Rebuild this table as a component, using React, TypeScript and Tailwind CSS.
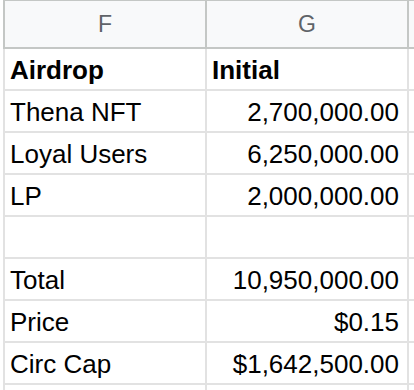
const rows: [string, string, boolean?][] = [
  ["Airdrop", "Initial", true],
  ["Thena NFT", "2,700,000.00"],
  ["Loyal Users", "6,250,000.00"],
  ["LP", "2,000,000.00"],
  ["", ""],
  ["Total", "10,950,000.00"],
  ["Price", "$0.15"],
  ["Circ Cap", "$1,642,500.00"],
  ["", ""],
]

const App = () => {
  return (
    <div className="w-[414px] h-[390px] overflow-hidden bg-white pl-[3px] font-['Liberation_Sans',Arial,sans-serif] text-black">
      <div className="flex h-[49px] border-t border-b-2 border-[#c4c7c5] bg-[#f8f9fa] text-[23px] text-[#5f6368]">
        <div className="w-[202px] border-l-2 border-[#c4c7c5] flex items-center justify-center pt-[1px]">F</div>
        <div className="w-[202px] border-l-2 border-[#c4c7c5] flex items-center justify-center pt-[1px]">G</div>
        <div className="w-[2px] bg-[#c4c7c5]" />
      </div>
      {rows.map(([label, value, bold], i) => (
        <div
          key={i}
          className={`flex h-[42px] shrink-0 border-b-2 border-[#e2e2e2] text-[26px] leading-none ${bold ? "font-bold" : ""}`}
        >
          <div className="w-[202px] border-l-2 border-[#e2e2e2] flex items-center pl-[5px] pt-[2px]">{label}</div>
          <div className="w-[202px] border-l-2 border-[#e2e2e2] flex items-center justify-end pr-[8px] pt-[2px]">
            {bold ? <span className="mr-auto pl-[5px]">{value}</span> : value}
          </div>
          <div className="w-[2px] bg-[#e2e2e2]" />
        </div>
      ))}
    </div>
  )
}

export default App
